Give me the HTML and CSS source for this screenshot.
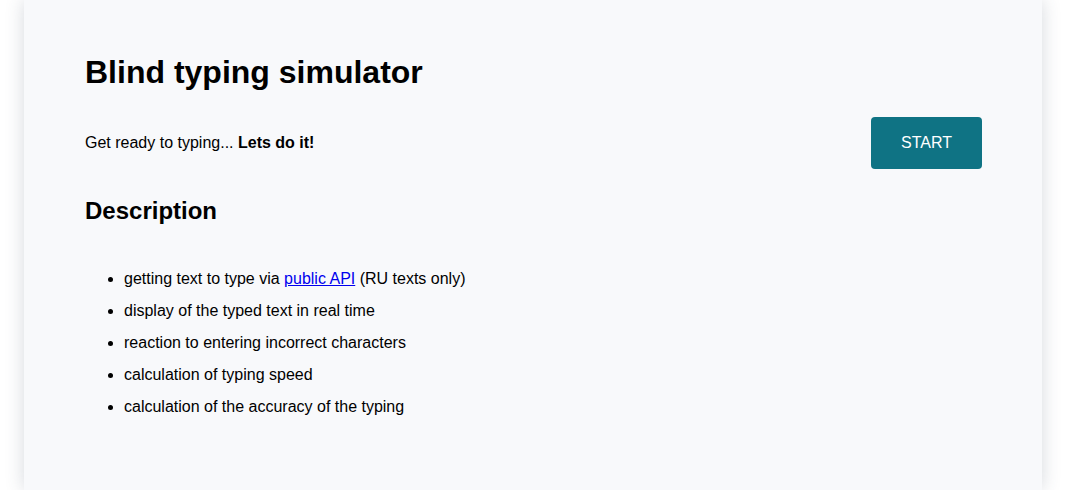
FILE: index.html
```html
<!DOCTYPE html>
<html lang="en">
<head>
<meta charset="utf-8">
<title>Blind typing simulator</title>
<link rel="stylesheet" href="styles.css">
</head>
<body>
<main class="page">
  <h1 class="title">Blind typing simulator</h1>
  <div class="intro">
    <p class="intro-text">Get ready to typing... <strong>Lets do it!</strong></p>
    <button class="start-btn" type="button">START</button>
  </div>
  <h2 class="subtitle">Description</h2>
  <ul class="features">
    <li>getting text to type via <a href="#" class="link">public API</a> (RU texts only)</li>
    <li>display of the typed text in real time</li>
    <li>reaction to entering incorrect characters</li>
    <li>calculation of typing speed</li>
    <li>calculation of the accuracy of the typing</li>
  </ul>
</main>
</body>
</html>
```

FILE: styles.css
```css
html, body {
  margin: 0;
  padding: 0;
  background: #ffffff;
}
body {
  font-family: "Liberation Sans", Arial, sans-serif;
  color: #000;
  overflow: hidden;
}
.page {
  box-sizing: border-box;
  width: 1018px;
  margin: 0 25px 0 24px;
  min-height: 100vh;
  padding: 54px 60px 40px 61px;
  background: #f8f9fb;
  box-shadow: 0 0 18px rgba(50, 65, 90, 0.2);
}
.title {
  margin: 0;
  font-size: 32px;
  font-weight: bold;
  line-height: 37px;
}
.intro {
  display: flex;
  align-items: center;
  justify-content: space-between;
  margin-top: 26px;
}
.intro-text {
  margin: 0;
  font-size: 16px;
  line-height: 18px;
}
.start-btn {
  width: 111px;
  height: 52px;
  border: none;
  border-radius: 4px;
  background: #0f7384;
  color: #fff;
  font-family: "Liberation Sans", Arial, sans-serif;
  font-size: 16px;
  padding: 0;
}
.subtitle {
  margin: 28px 0 0;
  font-size: 24px;
  font-weight: bold;
  line-height: 28px;
}
.features {
  margin: 38px 0 0;
  padding-left: 39px;
  font-size: 16px;
  line-height: 18px;
}
.features li {
  padding: 7px 0;
}
.link {
  color: #0000ee;
  text-decoration: underline;
}
```
